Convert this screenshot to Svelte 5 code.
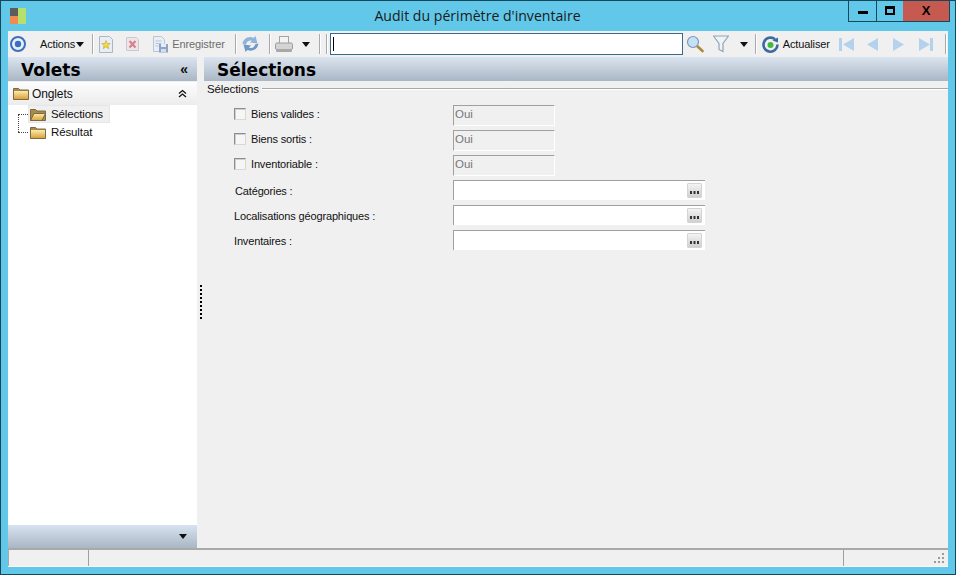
<script>
  const checks = [
    { label: 'Biens valides :', value: 'Oui' },
    { label: 'Biens sortis :', value: 'Oui' },
    { label: 'Inventoriable :', value: 'Oui' }
  ];
  const pickers = ['Catégories :', 'Localisations géographiques :', 'Inventaires :'];
</script>

{#snippet folder(open, id)}
  <svg width="16" height="13" viewBox="0 0 16 13">
    <defs>
      <linearGradient id={id} x1="0" y1="0" x2="0" y2="1">
        <stop offset="0" stop-color="#fcebad"/>
        <stop offset="1" stop-color="#d9a23c"/>
      </linearGradient>
    </defs>
    <path d="M.5 1.500h5l1.500 1.500h8.500v9.500h-15z" fill="#a98a4c" stroke="#7d6a44"/>
    {#if open}
      <path d="M.5 12.500l3.500-7h11.500l-3.500 7z" fill="url(#{id})" stroke="#7d6a44"/>
    {:else}
      <rect x="1" y="4" width="14" height="8" fill="url(#{id})"/>
    {/if}
  </svg>
{/snippet}

{#snippet caret()}
  <svg class="caret" width="8" height="5" viewBox="0 0 8 5"><path d="M0 0h8l-4 5z" fill="#111"/></svg>
{/snippet}

<div class="window">
  <header class="titlebar">
    <svg class="appicon" width="17" height="17" viewBox="0 0 17 17">
      <rect x="0" y="1" width="8" height="8" fill="#5c5c5c"/>
      <rect x="0" y="9" width="8" height="8" fill="#f08a4e"/>
      <rect x="8" y="1" width="8" height="16" fill="#b5e06a"/>
    </svg>
    <div class="title">Audit du périmètre d'inventaire</div>
    <div class="winbtns">
      <div class="wb min"><span></span></div>
      <div class="wb max"><span></span></div>
      <div class="wb close">X</div>
    </div>
  </header>

  <div class="client">
    <div class="toolbar">
      <svg class="i-target" width="18" height="18" viewBox="0 0 18 18">
        <circle cx="9" cy="9" r="7" fill="#e8f0fb" stroke="#3d6fc0" stroke-width="2"/>
        <circle cx="9" cy="9" r="3.200" fill="#3d6fc0"/>
      </svg>
      <span class="t actions">Actions</span>
      {@render caret()}
      <i class="sep s1"></i>
      <svg class="i-new" width="16" height="17" viewBox="0 0 16 17">
        <path d="M1.500.5h10l3 3v13h-13z" fill="#e8eef6" stroke="#a9b6c8"/>
        <path d="M8 4.500l1.300 3h3l-2.400 2 .9 3.200-2.800-1.800-2.800 1.800.9-3.200-2.400-2h3z" fill="#f2d84a" stroke="#c9a52a" stroke-width=".6"/>
      </svg>
      <svg class="i-del" width="15" height="16" viewBox="0 0 15 16">
        <path d="M1.500 1.500h10l2 2v11h-12z" fill="#eee5ea" stroke="#cfc6d2"/>
        <path d="M4.500 5l6 6.500M10.500 5l-6 6.500" stroke="#d9808a" stroke-width="2.200"/>
      </svg>
      <svg class="i-save" width="17" height="17" viewBox="0 0 17 17">
        <path d="M1.500.5h8l3 3v12h-11z" fill="#e8eef6" stroke="#bac6d6"/>
        <path d="M3.500 5h6M3.500 7.500h6M3.500 10h3" stroke="#b9c6d8"/>
        <rect x="7" y="8" width="9" height="8.500" fill="#8fa3c9"/>
        <rect x="9" y="8" width="5" height="3" fill="#e6edf6"/>
        <rect x="9" y="13" width="5" height="3" fill="#d5dcea"/>
      </svg>
      <span class="t grey save">Enregistrer</span>
      <i class="sep s2"></i>
      <svg class="i-sync" width="17" height="18" viewBox="0 0 17 18">
        <path d="M.5 9C1 3.500 7 .5 11.500 3L13.500 1l2 7.500-7.500-1 2-2C7 5 4.500 6.500 4 9.500z" fill="#8fb4d8"/>
        <path d="M16.500 8.500C16 14 10 17.500 5.500 15l-2 2-2-7.500 7.500 1-2 2c3 1.500 5.500 0 6-3z" fill="#6f9ac6"/>
      </svg>
      <i class="sep s3"></i>
      <svg class="i-print" width="18" height="18" viewBox="0 0 18 18">
        <rect x="4.500" y="1.500" width="9" height="7" fill="#f3f3f3" stroke="#a3a3a3"/>
        <rect x=".5" y="8" width="17" height="6.500" rx="1.500" fill="#d4d4d4" stroke="#9c9c9c"/>
        <rect x="1" y="14" width="16" height="3" rx="1" fill="#a8a8a8"/>
      </svg>
      <span class="printcaret">{@render caret()}</span>
      <i class="sep s4"></i>
      <i class="sep s5"></i>
      <div class="search"><span class="cursor"></span></div>
      <svg class="i-find" width="18" height="18" viewBox="0 0 18 18">
        <path d="M10.500 10.500l6 5.500" stroke="#b0883a" stroke-width="2.600" stroke-linecap="round"/>
        <circle cx="7" cy="7" r="5.500" fill="#c6e0f6" stroke="#7c98b6" stroke-width="1.200"/>
      </svg>
      <svg class="i-funnel" width="16" height="18" viewBox="0 0 16 18">
        <path d="M.5 1h15l-5.500 7.500v8l-4-2v-6z" fill="#eef3f8" stroke="#8fa5b6" stroke-width="1.200"/>
      </svg>
      <span class="funnelcaret">{@render caret()}</span>
      <i class="sep s6"></i>
      <svg class="i-refresh" width="17" height="17" viewBox="0 0 17 17">
        <path d="M13 3.300A7 7 0 1 0 15.500 8.500" fill="none" stroke="#3a6aa0" stroke-width="2.600"/>
        <path d="M10.500 4.500l5.500-3v5z" fill="#3a6aa0"/>
        <circle cx="8.500" cy="9" r="3" fill="#46b83c"/>
      </svg>
      <span class="t refreshlabel">Actualiser</span>
      <svg class="n n1" width="16" height="15" viewBox="0 0 16 15"><rect x="0" y="1" width="3" height="13" fill="#b4d2ee"/><path d="M15 1v13l-11-6.500z" fill="#b4d2ee"/></svg>
      <svg class="n n2" width="13" height="15" viewBox="0 0 13 15"><path d="M12 1v13l-11-6.500z" fill="#b4d2ee"/></svg>
      <svg class="n n3" width="13" height="15" viewBox="0 0 13 15"><path d="M1 1v13l11-6.500z" fill="#b4d2ee"/></svg>
      <svg class="n n4" width="16" height="15" viewBox="0 0 16 15"><rect x="12" y="1" width="3" height="13" fill="#b4d2ee"/><path d="M1 1v13l11-6.500z" fill="#b4d2ee"/></svg>
      <i class="sep s7"></i>
    </div>

    <div class="panes">
      <aside class="left">
        <div class="phead">
          <span class="h">Volets</span>
          <span class="chev">«</span>
        </div>
        <div class="group">
          {@render folder(false, 'fg')}
          <span class="t grouplabel">Onglets</span>
          <svg class="up" width="9" height="9" viewBox="0 0 9 9"><path d="M1 4.500l3.500-3 3.500 3M1 8l3.500-3 3.500 3" fill="none" stroke="#111" stroke-width="1.300"/></svg>
        </div>
        <div class="tree">
          <div class="line"></div>
          <div class="node">
            <span class="dash"></span>
            <div class="item sel">
              {@render folder(true, 'f1')}
              <span class="t">Sélections</span>
            </div>
          </div>
          <div class="node">
            <span class="dash"></span>
            <div class="item">
              {@render folder(false, 'f2')}
              <span class="t">Résultat</span>
            </div>
          </div>
        </div>
        <div class="pfoot">{@render caret()}</div>
      </aside>

      <div class="splitter"><div class="grip"></div></div>

      <main class="right">
        <div class="phead main">
          <span class="h">Sélections</span>
        </div>
        <div class="legend">
          <span class="t">Sélections</span>
          <i></i>
        </div>
        <div class="form">
          {#each checks as c}
            <div class="row">
              <div class="lab chk"><span class="box"></span><span class="t">{c.label}</span></div>
              <div class="field ro"><span>{c.value}</span></div>
            </div>
          {/each}
          {#each pickers as p, i}
            <div class="row">
              <div class="lab" class:first={i === 0}><span class="t">{p}</span></div>
              <div class="field wide"><button class="dots" aria-label="Parcourir">
                <svg width="9" height="3" viewBox="0 0 9 3"><path d="M0 0h2v3h-2zM3.500 0h2v3h-2zM7 0h2v3h-2z" fill="#333"/></svg>
              </button></div>
            </div>
          {/each}
        </div>
      </main>
    </div>

    <footer class="status">
      <div class="cell c1"></div>
      <div class="cell c2"></div>
      <div class="cell c3">
        <svg width="11" height="11" viewBox="0 0 11 11"><path d="M8 0h2v2h-2zM8 4h2v2h-2zM4 4h2v2h-2zM8 8h2v2h-2zM4 8h2v2h-2zM0 8h2v2h-2z" fill="#9b9b9b"/></svg>
      </div>
    </footer>
  </div>
</div>

<style>
  :global(body) { margin: 0; }
  * { box-sizing: border-box; }
  .window {
    width: 956px; height: 575px; background: #62c8ea;
    border: 1px solid #17475a;
    display: flex; flex-direction: column;
    font-family: "Liberation Sans", Arial, sans-serif; font-size: 11.5px; color: #111;
    overflow: hidden;
  }
  .t { white-space: nowrap; letter-spacing: -.12px; }
  .titlebar { height: 30px; flex: none; position: relative; display: flex; align-items: flex-start; }
  .appicon { margin: 6px 0 0 9px; }
  .title {
    position: absolute; left: 0; right: 0; top: 5px; text-align: center; padding-right: 1px;
    font-family: "Open Sans", sans-serif; font-size: 14.100px; color: #1a1a1a; line-height: 20px;
  }
  .winbtns {
    position: absolute; right: 5px; top: -1px; height: 22px; display: flex;
    border: 1px solid #17475a; border-top: 0;
  }
  .wb { display: flex; align-items: center; justify-content: center; }
  .min { width: 28px; border-right: 1px solid #17475a; }
  .min span { width: 10px; height: 3px; background: #000; margin-top: 4px; }
  .max { width: 26px; }
  .max span { width: 10px; height: 9px; border: 2px solid #000; border-top-width: 3px; }
  .close { width: 46px; background: #c75a50; font: bold 13px "Liberation Sans", sans-serif; color: #000; }

  .client { flex: 1; margin: 0 7px 7px 7px; display: flex; flex-direction: column; background: #f0f0f0; min-height: 0; }
  .toolbar { height: 26px; flex: none; display: flex; align-items: center; background: #f0f0f0; }
  .toolbar > * { flex: none; }
  .toolbar .t { font-size: 11px; }
  .sep { width: 1px; height: 20px; background: #a9a9a9; border-right: 1px solid #fff; box-sizing: content-box; }
  .i-target { margin-left: 1px; }
  .actions { margin-left: 13px; }
  .caret { display: block; }
  .toolbar > .caret { margin-left: 1px; }
  .s1 { margin-left: 8px; }
  .i-new { margin-left: 4px; }
  .i-del { margin-left: 11px; }
  .i-save { margin-left: 12px; }
  .grey { color: #6d6d6d; }
  .save { margin-left: 3px; }
  .s2 { margin-left: 10px; }
  .i-sync { margin-left: 5px; }
  .s3 { margin-left: 10px; }
  .i-print { margin-left: 4px; }
  .printcaret { margin-left: 9px; }
  .s4 { margin-left: 9px; }
  .s5 { margin-left: 5px; }
  .search { width: 353px; height: 22px; margin-left: 2px; background: #fff; border: 1px solid #3a6a8a; padding: 3px 0 0 2px; }
  .cursor { display: block; width: 1px; height: 14px; background: #000; }
  .i-find { margin-left: 3px; }
  .i-funnel { margin-left: 9px; }
  .funnelcaret { margin-left: 11px; }
  .s6 { margin-left: 7px; }
  .i-refresh { margin-left: 5px; }
  .refreshlabel { margin-left: 4px; }
  .n1 { margin-left: 9px; }
  .n2 { margin-left: 11px; }
  .n3 { margin-left: 13px; }
  .n4 { margin-left: 13px; }
  .s7 { margin-left: 11px; }

  .panes { flex: 1; display: flex; min-height: 0; }
  .left { width: 189px; flex: none; display: flex; flex-direction: column; }
  .phead {
    height: 24px; flex: none; display: flex; align-items: center; justify-content: space-between;
    background: linear-gradient(#dbe5f0, #a9b6c4); padding: 0 9px 0 13px;
  }
  .h { font: bold 17px/24px "DejaVu Sans", sans-serif; color: #000; padding-top: 1px; }
  .chev { font: bold 14px/20px "Liberation Sans", sans-serif; margin-top: -1px; }
  .group {
    height: 23px; flex: none; display: flex; align-items: center; padding: 0 10px 0 5px; margin-top: 1px;
    background: linear-gradient(#fdfdfd, #ececec);
  }
  .grouplabel { margin-left: 3px; font-size: 12px; }
  .up { margin-left: auto; }
  .tree { flex: 1; background: #fff; position: relative; }
  .line { position: absolute; left: 10px; top: 9px; height: 18px; border-left: 1px dotted #444; }
  .node { height: 18px; display: flex; align-items: center; padding-left: 10px; }
  .dash { width: 10px; border-top: 1px dotted #444; flex: none; }
  .item { height: 18px; display: flex; align-items: center; gap: 5px; padding: 0 5px 0 2px; }
  .sel { background: #f0f0f0; border: 1px solid #e6e6e6; padding-left: 1px; padding-right: 6px; }
  .splitter { width: 7px; flex: none; display: flex; align-items: flex-start; }
  .grip { width: 1.500px; height: 34px; margin: 228px 0 0 3px; background: repeating-linear-gradient(#000 0 2px, transparent 2px 4px); }
  .pfoot {
    height: 23px; flex: none; display: flex; align-items: center; justify-content: flex-end;
    background: linear-gradient(#d8e3f0, #a9b6c4); padding-right: 10px;
  }
  .right { flex: 1; min-width: 0; display: flex; flex-direction: column; }
  .phead.main { padding-left: 13px; flex: none; }
  .legend { display: flex; align-items: center; gap: 3px; height: 14px; padding-left: 3px; margin-top: 1px; }
  .legend i { flex: 1; height: 2px; background: linear-gradient(#a8a8a8 50%, #fff 50%); }
  .form { padding: 9px 0 0 30px; display: flex; flex-direction: column; gap: 4px; }
  .form .t { font-size: 11px; letter-spacing: -.15px; }
  .row { display: flex; height: 21px; }
  .lab { width: 219px; flex: none; display: flex; align-items: center; }
  .lab.first { padding-left: 1px; }
  .chk { align-items: flex-start; }
  .chk .t { margin-left: 5px; margin-top: 3px; }
  .box {
    width: 12px; height: 12px; margin-top: 3px; flex: none;
    background: #f6f6f6; border: 1px solid #8d8d8d; border-right-color: #d8d8d8; border-bottom-color: #d8d8d8;
    box-shadow: inset 1px 1px 0 #cfcfcf;
  }
  .field { border-top: 1px solid #a0a0a0; border-left: 1px solid #a0a0a0; }
  .ro { width: 102px; height: 21px; border-right: 1px solid #fff; border-bottom: 1px solid #fff; color: #777; padding: 2px 0 0 1px; }
  .wide { width: 252px; height: 20px; background: #fff; display: flex; justify-content: flex-end; padding: 2px 3px 0 0; }
  .dots {
    width: 15px; height: 15px; padding: 0 0 3px; background: linear-gradient(#f3f3f3, #d0d0d0);
    border: 1px solid #d4d4d4; border-radius: 1px; display: flex; align-items: flex-end; justify-content: center;
  }
  .status { height: 19px; flex: none; display: flex; border-top: 2px solid #a9a9a9; border-bottom: 1px solid #fff; }
  .cell { height: 100%; }
  .c1 { width: 81px; border-right: 1px solid #a0a0a0; border-left: 1px solid #a9a9a9; }
  .c2 { flex: 1; border-right: 1px solid #a0a0a0; }
  .c3 { width: 104px; display: flex; align-items: flex-end; justify-content: flex-end; padding: 0 3px 2px 0; }
</style>
